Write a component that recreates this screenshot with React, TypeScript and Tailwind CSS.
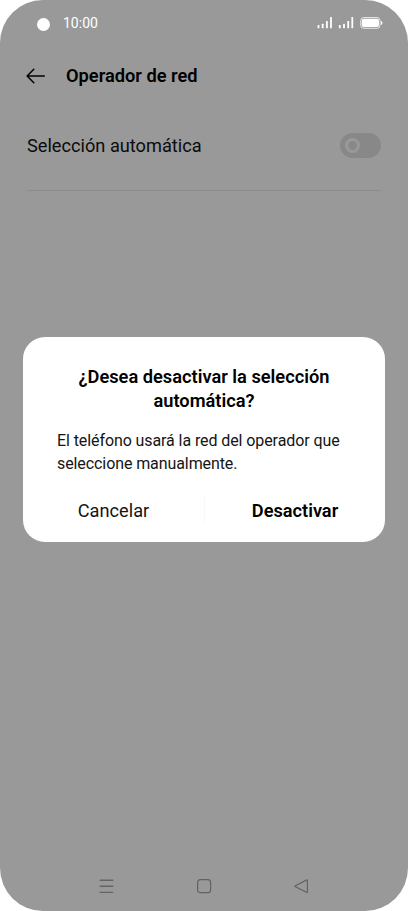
function StatusBar() {
  return (
    <header className="flex h-[46px] items-center pl-[37px] pr-[25px] text-white">
      <span className="mt-[3px] size-[13px] rounded-full bg-white" />
      <span className="ml-[13px] text-[14px] leading-5">10:00</span>
      <svg className="ml-auto" width="66" height="14" viewBox="0 0 66 14" fill="#fff">
        {[0, 21.3].map((x) => (
          <g key={x} transform={`translate(${x} 0)`}>
            <rect x="0.6" y="9.1" width="1.8" height="3.2" rx=".5" />
            <rect x="4.8" y="7.8" width="1.8" height="4.5" rx=".5" />
            <rect x="9" y="5" width="1.8" height="7.3" rx=".5" />
            <rect x="13.1" y="1" width="1.8" height="11.3" rx=".5" />
          </g>
        ))}
        <rect x="43.7" y="1.5" width="19.4" height="10.8" rx="3.2" fill="none" stroke="#fff" strokeOpacity=".75" />
        <rect x="44.8" y="2.7" width="17.2" height="8.4" rx="2" />
        <path d="M64 5c1.9.5 1.9 3.4 0 3.9z" />
      </svg>
    </header>
  );
}

function TitleBar() {
  return (
    <div className="flex h-[60px] items-center pl-[26px]">
      <svg width="20" height="16" viewBox="0 0 20 16" fill="none" stroke="#000" strokeWidth="1.5" strokeLinecap="round" strokeLinejoin="round">
        <path d="M18.3 8H1.2M7.8 1.3 1.1 8l6.7 6.7" />
      </svg>
      <h1 className="ml-5 whitespace-nowrap text-[18.25px] font-semibold leading-6">Operador de red</h1>
    </div>
  );
}

function AutomaticSelection() {
  return (
    <div className="mx-[27px] flex h-[85px] items-center justify-between border-b border-[#8c8c8c]">
      <span className="mb-[5px] whitespace-nowrap text-[18.2px] leading-6 text-[#0b0b0b]">Selección automática</span>
      <span className="mb-[6px] flex h-[25px] w-[41px] items-center rounded-full bg-[#888] pl-[5px]">
        <span className="size-[15px] rounded-full border-[3px] border-[#999]" />
      </span>
    </div>
  );
}

function NavigationBar() {
  return (
    <nav className="mt-auto flex h-[50px] justify-between px-[99px] pt-[18px]">
      <svg width="15" height="15" viewBox="0 0 15 15" fill="none" stroke="#646464" strokeWidth="1.4">
        <path d="M.7 1.2h13.6M.7 7.3h13.6M.7 13.4h13.6" />
      </svg>
      <svg width="15" height="15" viewBox="0 0 15 15" fill="none" stroke="#626262" strokeWidth="1.2">
        <rect x=".6" y=".7" width="13" height="13" rx="2.8" />
      </svg>
      <svg width="15" height="15" viewBox="0 0 15 15" fill="none" stroke="#626262" strokeWidth="1.2" strokeLinejoin="round">
        <path d="M12.4 1.1 1.4 6.7c-.5.3-.5.7 0 1l11 5.6c.6.3 1 .1 1-.5V1.6c0-.6-.4-.8-1-.5Z" />
      </svg>
    </nav>
  );
}

function ConfirmDialog() {
  return (
    <section role="dialog" className="absolute left-[23px] top-[337px] h-[205px] w-[362px] rounded-[22px] bg-white pt-7">
      <h2 className="text-center text-[18.25px] font-semibold leading-6">
        ¿Desea desactivar la selección
        <br />
        automática?
      </h2>
      <p className="ml-[34px] mt-4 whitespace-nowrap text-[16px] leading-[23px] tracking-[-0.09px] text-[#141414]">
        El teléfono usará la red del operador que
        <br />
        seleccione manualmente.
      </p>
      <div className="mt-[21px] flex h-[27px] items-center text-[18.2px] leading-6">
        <button className="w-[181px] pt-[2px] text-[#141414]">Cancelar</button>
        <span className="h-full w-px bg-[#f8f8f8]" />
        <button className="w-[180px] pt-[2px] font-semibold">Desactivar</button>
      </div>
    </section>
  );
}

export default function App() {
  return (
    <div className="h-[911px] w-[408px] overflow-hidden bg-white font-['Roboto',sans-serif] text-black">
      <main className="relative flex h-full flex-col rounded-[43px] bg-[#999]">
        <StatusBar />
        <TitleBar />
        <AutomaticSelection />
        <NavigationBar />
        <ConfirmDialog />
      </main>
    </div>
  );
}
